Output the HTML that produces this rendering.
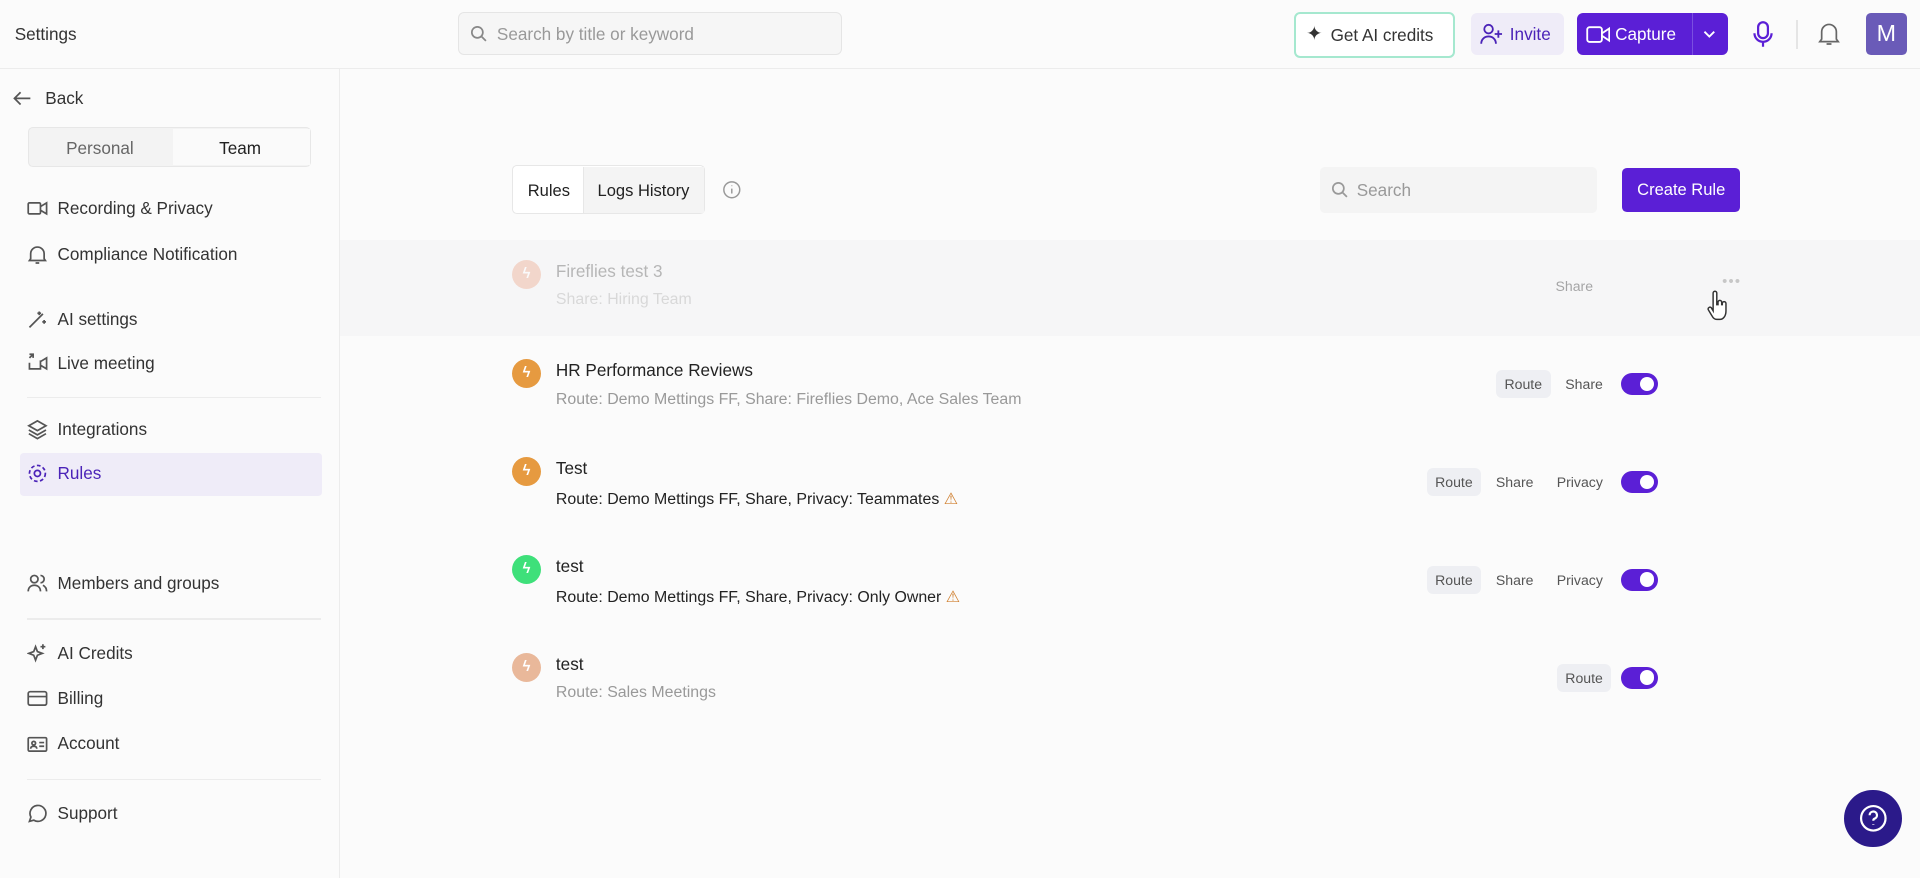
<!DOCTYPE html>
<html><head><meta charset="utf-8">
<style>
*{box-sizing:border-box;margin:0;padding:0}
html,body{width:1920px;height:878px;overflow:hidden;background:#fbfbfb}
#w{width:1568px;height:717px;zoom:1.2244898;position:relative;font-family:"Liberation Sans",sans-serif;color:#222;background:#fbfbfb}
.a{position:absolute}
.top{left:0;top:0;width:1568px;height:56px;border-bottom:1px solid #ececec;background:#fbfbfb}
.side{left:0;top:56px;width:278px;height:661px;border-right:1px solid #ececec}
.nav{position:absolute;left:22px;font-size:14px;color:#333;display:flex;align-items:center;gap:8px}
.nav svg{width:17px;height:17px;stroke:#555;fill:none;stroke-width:1.4}
.hr{position:absolute;left:22px;width:240px;height:1px;background:#ececec}
.chip{display:inline-block;font-size:11.5px;color:#555;padding:5px 7px;border-radius:5px;margin-left:5px}
.chip.g{background:#eeeff3}
.tog{width:30px;height:18px;border-radius:9px;background:#5b1fd6;position:relative;margin-left:8px}
.tog:after{content:"";position:absolute;right:3px;top:3px;width:12px;height:12px;border-radius:50%;background:#fff}
.row{left:418px;width:1004px;height:60px}
.ic{position:absolute;left:0;top:2px;width:24px;height:24px;border-radius:50%;color:#fff;font-size:12px;font-weight:bold;display:flex;align-items:center;justify-content:center}
.t1{position:absolute;left:36px;top:3px;font-size:14px;color:#222}
.t2{position:absolute;left:36px;top:28px;font-size:13px;color:#999}
.r{position:absolute;right:68px;top:11px;display:flex;align-items:center}
</style></head><body><div id="w">
<div class="a top">
 <div class="a" style="left:12px;top:20px;font-size:14px;color:#333">Settings</div>
 <div class="a" style="left:374px;top:10px;width:314px;height:35px;border:1px solid #e5e5e5;border-radius:5px;background:#f6f6f6;font-size:14px;color:#999;padding:9px 0 0 31px">Search by title or keyword
  <svg class="a" style="left:9px;top:10px" width="14" height="14" viewBox="0 0 14 14" fill="none" stroke="#888" stroke-width="1.4"><circle cx="6" cy="6" r="4.5"/><path d="M9.5 9.5L13 13"/></svg></div>
 <div class="a" style="left:1057px;top:10px;width:131px;height:37px;border:2px solid #a5e8cf;border-radius:5px;font-size:14px;color:#333;padding:9px 0 0 28px;background:#fff">Get AI credits<span class="a" style="left:8px;top:6px;font-size:16px">✦</span></div>
 <div class="a" style="left:1201px;top:11px;width:76px;height:34px;border-radius:5px;background:#efecf8;font-size:14px;color:#4b23b8;padding:9px 0 0 32px">Invite
  <svg class="a" style="left:8px;top:8px" width="20" height="18" viewBox="0 0 20 18" fill="none" stroke="#4b23b8" stroke-width="1.5"><circle cx="7" cy="5" r="3.5"/><path d="M1 17c0-4 3-6 6-6s6 2 6 6M15 6v6M12 9h6"/></svg></div>
 <div class="a" style="left:1288px;top:11px;width:123px;height:34px;border-radius:5px;background:#5b1fd6;font-size:14px;color:#fff;padding:9px 0 0 31px">Capture
  <svg class="a" style="left:7px;top:10px" width="20" height="14" viewBox="0 0 20 14" fill="none" stroke="#fff" stroke-width="1.5"><rect x="1" y="1" width="12" height="12" rx="2"/><path d="M13 6l6-4v10l-6-4"/></svg>
  <div class="a" style="left:94px;top:0;width:1px;height:34px;background:#7a4fe0"></div>
  <svg class="a" style="left:102px;top:12px" width="12" height="10" viewBox="0 0 12 10" fill="none" stroke="#fff" stroke-width="1.5"><path d="M2 3l4 4 4-4"/></svg></div>
 <svg class="a" style="left:1431px;top:17px" width="18" height="22" viewBox="0 0 18 22" fill="none" stroke="#5b1fd6" stroke-width="1.8"><rect x="5" y="1" width="8" height="13" rx="4"/><path d="M2 10a7 7 0 0 0 14 0M9 17v4"/></svg>
 <div class="a" style="left:1467px;top:16px;width:1px;height:24px;background:#e5e5e5"></div>
 <svg class="a" style="left:1485px;top:18px" width="18" height="20" viewBox="0 0 18 20" fill="none" stroke="#666" stroke-width="1.4"><path d="M3 14V8a6 6 0 0 1 12 0v6l1.5 2h-15zM7 18h4"/></svg>
 <div class="a" style="left:1524px;top:11px;width:33px;height:34px;border-radius:4px;background:#6a5bb8;color:#fff;font-size:19px;text-align:center;line-height:34px">M</div>
</div>
<div class="a side">
 <div class="nav" style="top:16px;left:10px;gap:10px"><svg viewBox="0 0 17 17"><path d="M15 8.5H2M7 3.5l-5 5 5 5"/></svg>Back</div>
 <div class="a" style="left:23px;top:48px;width:231px;height:32px;border:1px solid #e7e7e7;border-radius:4px;background:#f3f3f3"></div>
 <div class="a" style="left:141px;top:49px;width:112px;height:30px;background:#fafafa"></div>
 <div class="a" style="left:54px;top:57px;font-size:14px;color:#666">Personal</div>
 <div class="a" style="left:179px;top:57px;font-size:14px;color:#222">Team</div>
 <div class="nav" style="top:106px"><svg viewBox="0 0 17 17"><rect x="1" y="4" width="10" height="9" rx="1"/><path d="M11 7l5-3v9l-5-3"/></svg>Recording &amp; Privacy</div>
 <div class="nav" style="top:143px"><svg viewBox="0 0 17 17"><path d="M3 12V8a5.5 5.5 0 0 1 11 0v4l1 1.5H2zM7 15.5h3"/></svg>Compliance Notification</div>
 <div class="nav" style="top:196px"><svg viewBox="0 0 17 17"><path d="M2 15L13 4M10 2v3M8.5 3.5h3M14 9v3M12.5 10.5h3"/></svg>AI settings</div>
 <div class="nav" style="top:232px"><svg viewBox="0 0 17 17"><path d="M2 8v5h9V6M2 4l3-3M2 1h3v3M11 7l5-3v9l-5-3"/></svg>Live meeting</div>
 <div class="hr" style="top:268px"></div>
 <div class="nav" style="top:286px"><svg viewBox="0 0 17 17"><path d="M8.5 1.5l7 4-7 4-7-4zM1.5 9l7 4 7-4M1.5 12l7 4 7-4"/></svg>Integrations</div>
 <div class="a" style="left:16px;top:314px;width:247px;height:35px;background:#efecf8;border-radius:3px"></div>
 <div class="nav" style="top:322px;color:#4b23b8"><svg viewBox="0 0 17 17" style="stroke:#4b23b8"><circle cx="8.5" cy="8.5" r="2.5"/><circle cx="8.5" cy="8.5" r="6.5" stroke-dasharray="3 2"/></svg>Rules</div>
 <div class="nav" style="top:412px"><svg viewBox="0 0 17 17"><circle cx="6" cy="5" r="3"/><path d="M1 15c0-3 2-5 5-5s5 2 5 5M11 2a3 3 0 0 1 0 6M13 10c2 1 3 3 3 5"/></svg>Members and groups</div>
 <div class="hr" style="top:449px"></div>
 <div class="nav" style="top:469px"><svg viewBox="0 0 17 17"><path d="M7 3l1.5 4 4 1.5-4 1.5L7 14l-1.5-4-4-1.5 4-1.5zM13 1v4M11 3h4"/></svg>AI Credits</div>
 <div class="nav" style="top:506px"><svg viewBox="0 0 17 17"><rect x="1" y="3" width="15" height="11" rx="1.5"/><path d="M1 7h15"/></svg>Billing</div>
 <div class="nav" style="top:543px"><svg viewBox="0 0 17 17"><rect x="1" y="3" width="15" height="11" rx="1"/><circle cx="5.5" cy="7.5" r="1.5"/><path d="M3 12c0-1.5 1-2 2.5-2s2.5.5 2.5 2M10 7h4M10 10h4"/></svg>Account</div>
 <div class="hr" style="top:580px"></div>
 <div class="nav" style="top:600px"><svg viewBox="0 0 17 17"><path d="M2 15l1.2-3.5A6.5 6.5 0 1 1 5.5 14z"/></svg>Support</div>
</div>
<div class="a" style="left:418px;top:135px;width:158px;height:40px;border:1px solid #e7e7e7;border-radius:4px;background:#fff"></div>
<div class="a" style="left:476px;top:136px;width:99px;height:38px;background:#f4f4f4;border-left:1px solid #e7e7e7"></div>
<div class="a" style="left:431px;top:148px;font-size:13.5px">Rules</div>
<div class="a" style="left:488px;top:148px;font-size:13.5px">Logs History</div>
<svg class="a" style="left:590px;top:147px" width="16" height="16" viewBox="0 0 16 16" fill="none" stroke="#999" stroke-width="1.2"><circle cx="8" cy="8" r="6.5"/><path d="M8 7v4M8 4.5v.5"/></svg>
<div class="a" style="left:1078px;top:136px;width:226px;height:38px;background:#f4f4f4;border-radius:4px;font-size:14px;color:#999;padding:11px 0 0 30px">Search
 <svg class="a" style="left:9px;top:12px" width="14" height="14" viewBox="0 0 14 14" fill="none" stroke="#999" stroke-width="1.4"><circle cx="6" cy="6" r="4.5"/><path d="M9.5 9.5L13 13"/></svg></div>
<div class="a" style="left:1325px;top:137px;width:96px;height:36px;background:#5b1fd6;border-radius:4px;color:#fff;font-size:13.5px;text-align:center;line-height:36px">Create Rule</div>

<div class="a" style="left:278px;top:196px;width:1290px;height:78px;background:#f6f6f7"></div>
<div class="a row" style="top:210px;opacity:.5">
 <div class="ic" style="background:#f0b8a0">ϟ</div>
 <div class="t1" style="color:#777">Fireflies test 3</div><div class="t2" style="color:#bbb">Share: Hiring Team</div>
 <div class="r" style="right:114px;top:12px"><span class="chip">Share</span></div>
 <div class="a" style="right:0;top:14px;color:#999;font-size:12px;letter-spacing:1px">•••</div>
</div>
<svg class="a" style="left:1394px;top:237px" width="18" height="30" viewBox="0 0 18 30" fill="#fff" stroke="#333" stroke-width="1.2"><path d="M5 2.5a1.5 1.5 0 0 1 3 0V12h1V10a1.5 1.5 0 0 1 3 0v2h.5v-1a1.5 1.5 0 0 1 3 0v6c0 4-2 7-5 7H8c-2 0-3-1-4-3l-3-5a1.5 1.5 0 0 1 2.5-1.5L5 17z"/></svg>
<div class="a row" style="top:291px">
 <div class="ic" style="background:#e69a40">ϟ</div>
 <div class="t1">HR Performance Reviews</div><div class="t2">Route: Demo Mettings FF, Share: Fireflies Demo, Ace Sales Team</div>
 <div class="r"><span class="chip g">Route</span><span class="chip">Share</span><div class="tog"></div></div>
</div>
<div class="a row" style="top:371px">
 <div class="ic" style="background:#e69a40">ϟ</div>
 <div class="t1">Test</div><div class="t2" style="color:#222">Route: Demo Mettings FF, Share, Privacy: Teammates <span style="color:#d08030">⚠</span></div>
 <div class="r"><span class="chip g">Route</span><span class="chip">Share</span><span class="chip">Privacy</span><div class="tog"></div></div>
</div>
<div class="a row" style="top:451px">
 <div class="ic" style="background:#3ee07a">ϟ</div>
 <div class="t1">test</div><div class="t2" style="color:#222">Route: Demo Mettings FF, Share, Privacy: Only Owner <span style="color:#d08030">⚠</span></div>
 <div class="r"><span class="chip g">Route</span><span class="chip">Share</span><span class="chip">Privacy</span><div class="tog"></div></div>
</div>
<div class="a row" style="top:531px">
 <div class="ic" style="background:#e9b89a">ϟ</div>
 <div class="t1">test</div><div class="t2">Route: Sales Meetings</div>
 <div class="r"><span class="chip g">Route</span><div class="tog"></div></div>
</div>
<div class="a" style="left:1506px;top:645px;width:47px;height:47px;border-radius:50%;background:#2b1a8a"></div>
<svg class="a" style="left:1517px;top:656px" width="25" height="25" viewBox="0 0 25 25" fill="none" stroke="#fff" stroke-width="1.8"><circle cx="12.5" cy="12.5" r="10"/><path d="M9.5 10a3 3 0 1 1 4 2.8c-.7.3-1 .8-1 1.7M12.5 17.5v.5"/></svg>
</div></body></html>
